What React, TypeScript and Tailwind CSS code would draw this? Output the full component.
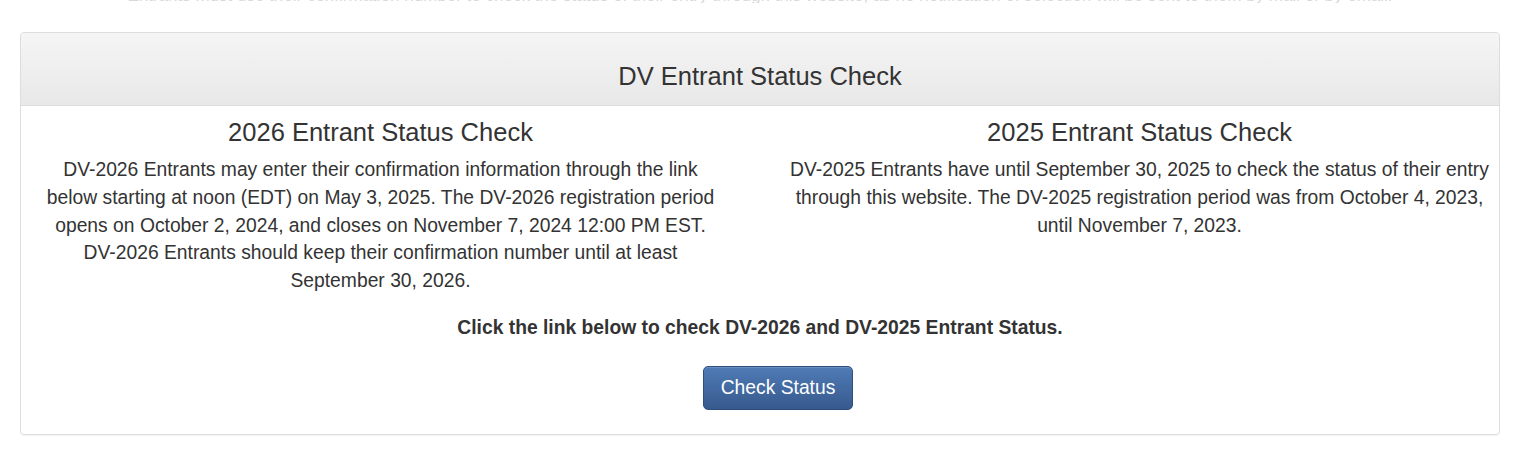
const columns = [
  {
    title: '2026 Entrant Status Check',
    text: 'DV-2026 Entrants may enter their confirmation information through the link below starting at noon (EDT) on May 3, 2025. The DV-2026 registration period opens on October 2, 2024, and closes on November 7, 2024 12:00 PM EST. DV-2026 Entrants should keep their confirmation number until at least September 30, 2026.',
    width: 'max-w-[684px]',
  },
  {
    title: '2025 Entrant Status Check',
    text: 'DV-2025 Entrants have until September 30, 2025 to check the status of their entry through this website. The DV-2025 registration period was from October 4, 2023, until November 7, 2023.',
    width: 'max-w-[724px]',
  },
];

const App = () => {
  return (
    <div className="w-full h-[470px] overflow-hidden bg-white text-[#333] font-['Liberation_Sans',Arial,sans-serif]">
      {/* previous section, scrolled almost out of view */}
      <div className="h-[3px] overflow-hidden">
        <p className="-mt-[14px] text-center text-[17px] leading-[20px] text-[#d8d8d8] whitespace-nowrap">
          Entrants must use their confirmation number to check the status of their entry through this website, as no notification of selection will be sent to them by mail or by email.
        </p>
      </div>

      <div className="mx-5 mt-[29px] border border-[#ddd] rounded-[4px] shadow-[0_1px_1px_rgba(0,0,0,0.05)]">
        <div className="h-[73px] pt-[14px] flex items-center justify-center border-b border-[#ddd] rounded-t-[3px] bg-linear-to-b from-[#f5f5f5] to-[#e8e8e8]">
          <h2 className="text-[25.5px] leading-[28px]">DV Entrant Status Check</h2>
        </div>

        <div className="pt-[12px] pb-[24px]">
          <div className="grid grid-cols-2 -mx-5">
            {columns.map((col) => (
              <div key={col.title} className="text-center">
                <h3 className="text-[25.5px] leading-[28px]">{col.title}</h3>
                <p className={`mx-auto mt-[10px] text-[19.3px] leading-[27.8px] ${col.width}`}>{col.text}</p>
              </div>
            ))}
          </div>

          <p className="mt-[19px] text-center text-[19.3px] leading-[28px] font-bold">
            Click the link below to check DV-2026 and DV-2025 Entrant Status.
          </p>

          <div className="mt-[24px] pl-[36px] flex justify-center">
            <button className="w-[150px] h-[44px] rounded-[5px] border border-[#2e4e80] bg-linear-to-b from-[#4f7bb6] to-[#375a8e] text-white text-[19.3px] shadow-[inset_0_1px_0_rgba(255,255,255,0.15)]">
              Check Status
            </button>
          </div>
        </div>
      </div>
    </div>
  );
};

export default App;
